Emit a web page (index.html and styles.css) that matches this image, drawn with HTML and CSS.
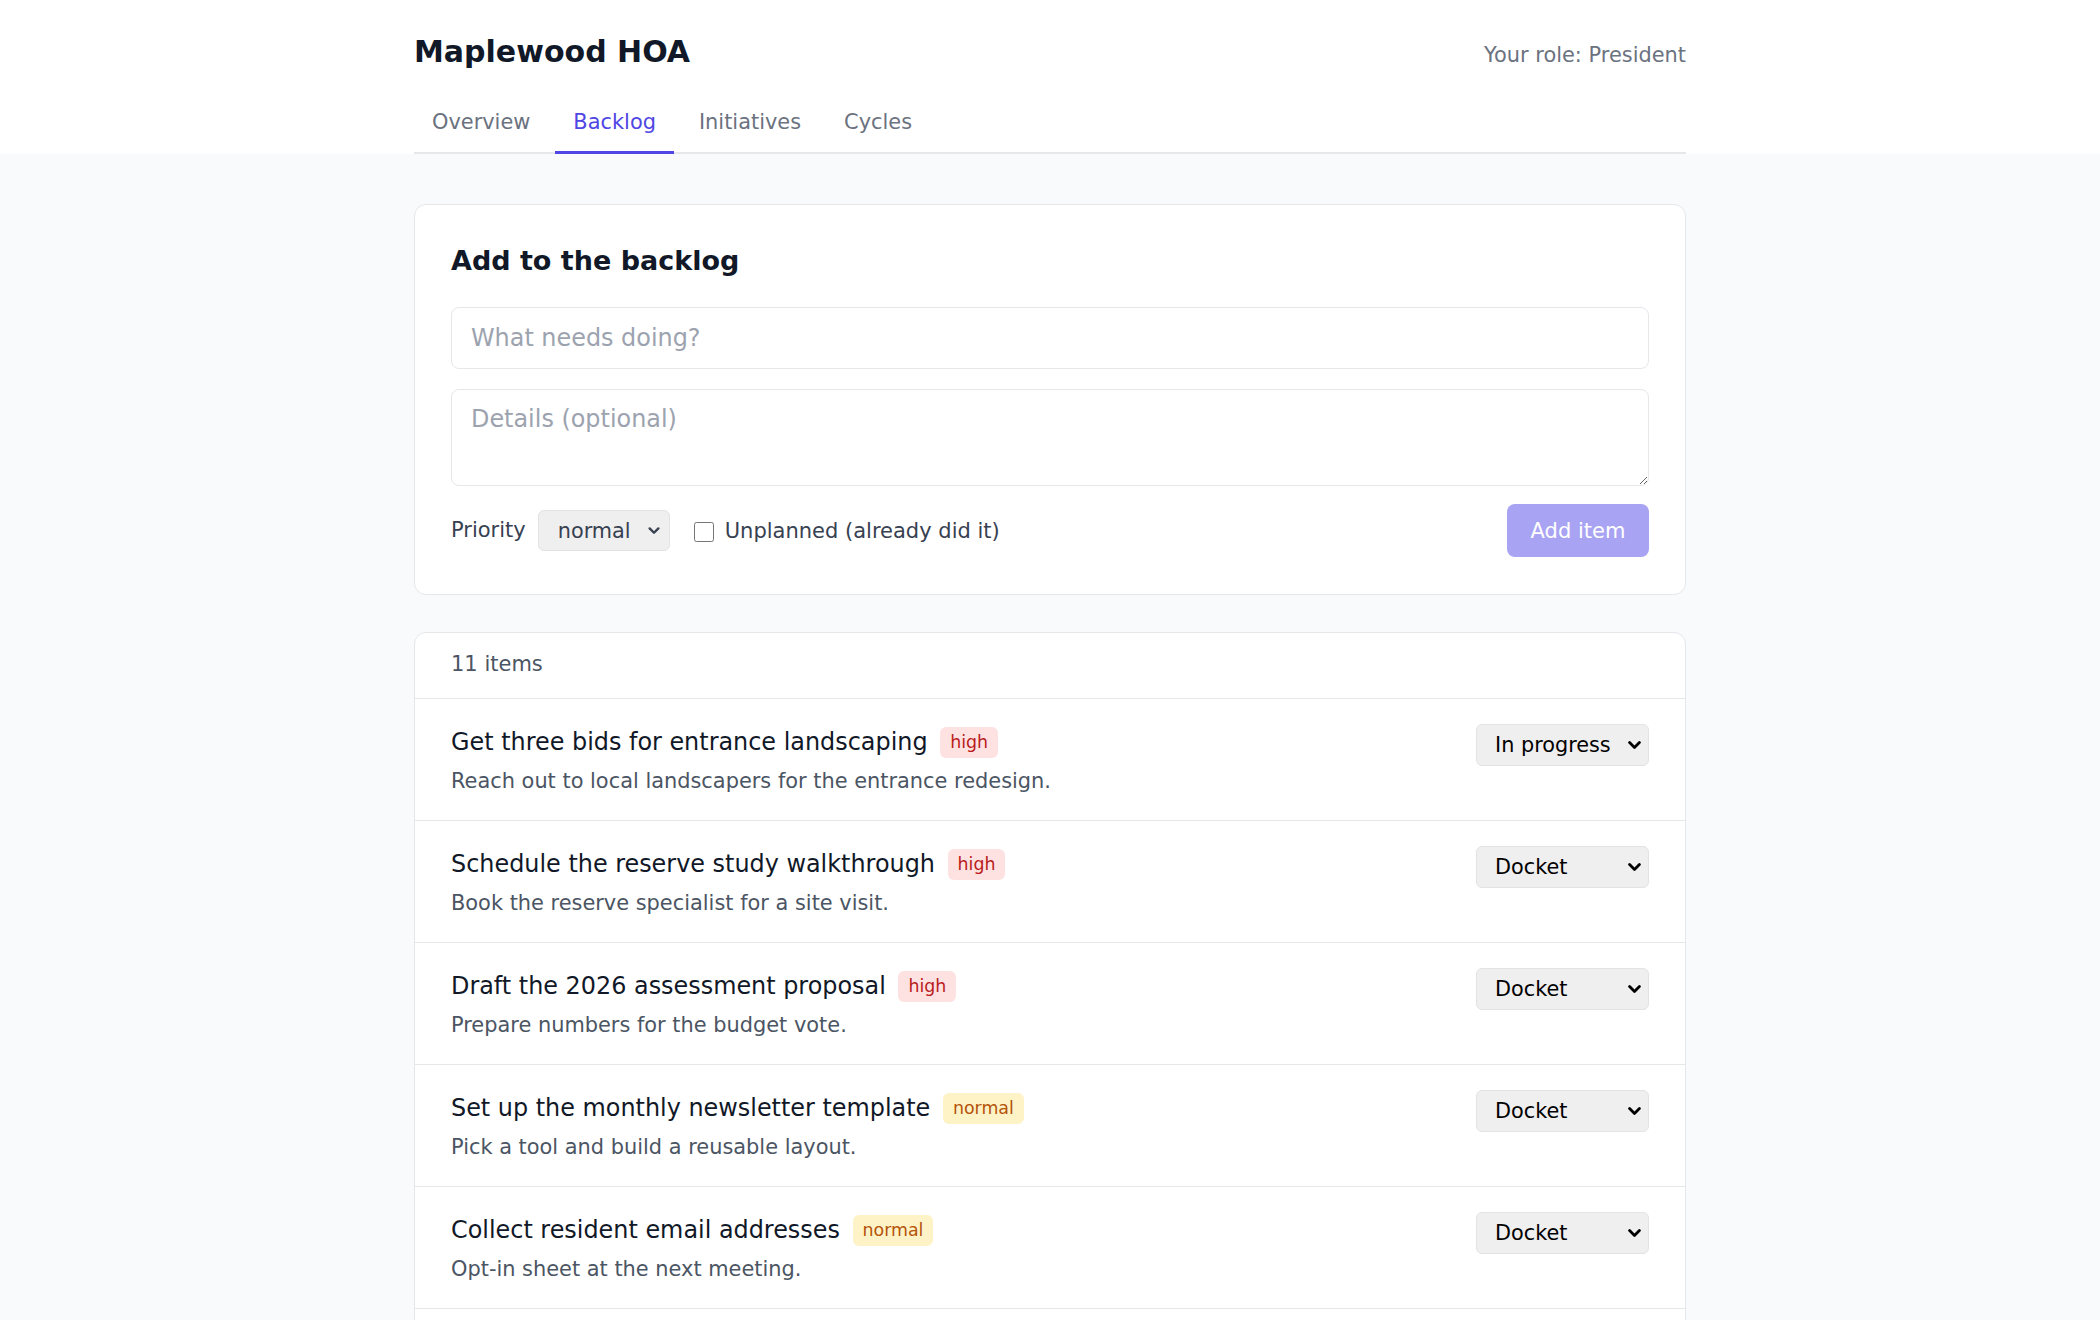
FILE: index.html
```html
<!DOCTYPE html>
<html lang="en">
<head>
<meta charset="utf-8">
<title>Maplewood HOA — Backlog</title>
<link rel="stylesheet" href="styles.css">
</head>
<body>
<header class="site-header">
  <div class="container">
    <div class="topbar">
      <h1 class="brand">Maplewood HOA</h1>
      <span class="role">Your role: President</span>
    </div>
    <nav class="tabs">
      <a class="tab" href="#">Overview</a>
      <a class="tab active" href="#">Backlog</a>
      <a class="tab" href="#">Initiatives</a>
      <a class="tab" href="#">Cycles</a>
    </nav>
  </div>
</header>

<main class="container main">
  <section class="card add-card">
    <h2 class="card-title">Add to the backlog</h2>
    <input class="field" type="text" placeholder="What needs doing?">
    <textarea class="field area" placeholder="Details (optional)"></textarea>
    <div class="form-row">
      <label class="prio-label">Priority</label>
      <select class="select prio-select">
        <option>low</option>
        <option selected>normal</option>
        <option>high</option>
      </select>
      <label class="check">
        <input type="checkbox" class="checkbox">
        <span>Unplanned (already did it)</span>
      </label>
      <button class="btn-primary" disabled>Add item</button>
    </div>
  </section>

  <section class="card list-card">
    <div class="list-head">11 items</div>
    <ul class="items">
      <li class="item">
        <div class="item-body">
          <div class="item-title">Get three bids for entrance landscaping <span class="badge high">high</span></div>
          <div class="item-desc">Reach out to local landscapers for the entrance redesign.</div>
        </div>
        <select class="select status"><option>Docket</option><option selected>In progress</option><option>Done</option></select>
      </li>
      <li class="item">
        <div class="item-body">
          <div class="item-title">Schedule the reserve study walkthrough <span class="badge high">high</span></div>
          <div class="item-desc">Book the reserve specialist for a site visit.</div>
        </div>
        <select class="select status"><option selected>Docket</option><option>In progress</option><option>Done</option></select>
      </li>
      <li class="item">
        <div class="item-body">
          <div class="item-title">Draft the 2026 assessment proposal <span class="badge high">high</span></div>
          <div class="item-desc">Prepare numbers for the budget vote.</div>
        </div>
        <select class="select status"><option selected>Docket</option><option>In progress</option><option>Done</option></select>
      </li>
      <li class="item">
        <div class="item-body">
          <div class="item-title">Set up the monthly newsletter template <span class="badge normal">normal</span></div>
          <div class="item-desc">Pick a tool and build a reusable layout.</div>
        </div>
        <select class="select status"><option selected>Docket</option><option>In progress</option><option>Done</option></select>
      </li>
      <li class="item">
        <div class="item-body">
          <div class="item-title">Collect resident email addresses <span class="badge normal">normal</span></div>
          <div class="item-desc">Opt-in sheet at the next meeting.</div>
        </div>
        <select class="select status"><option selected>Docket</option><option>In progress</option><option>Done</option></select>
      </li>
      <li class="item">
        <div class="item-body">
          <div class="item-title">Replace the pool gate latch <span class="badge normal">normal</span></div>
          <div class="item-desc">Current latch does not close on its own.</div>
        </div>
        <select class="select status"><option selected>Docket</option><option>In progress</option><option>Done</option></select>
      </li>
      <li class="item">
        <div class="item-body">
          <div class="item-title">Update the architectural review form <span class="badge normal">normal</span></div>
          <div class="item-desc">Add a section for solar panel requests.</div>
        </div>
        <select class="select status"><option selected>Docket</option><option>In progress</option><option>Done</option></select>
      </li>
      <li class="item">
        <div class="item-body">
          <div class="item-title">Post the meeting minutes online <span class="badge normal">normal</span></div>
          <div class="item-desc">Upload last month's approved minutes.</div>
        </div>
        <select class="select status"><option selected>Docket</option><option>In progress</option><option>Done</option></select>
      </li>
      <li class="item">
        <div class="item-body">
          <div class="item-title">Repaint the mailbox kiosk <span class="badge low">low</span></div>
          <div class="item-desc">Get a quote for paint and labor.</div>
        </div>
        <select class="select status"><option selected>Docket</option><option>In progress</option><option>Done</option></select>
      </li>
      <li class="item">
        <div class="item-body">
          <div class="item-title">Organize the spring cleanup day <span class="badge low">low</span></div>
          <div class="item-desc">Pick a date and order dumpsters.</div>
        </div>
        <select class="select status"><option selected>Docket</option><option>In progress</option><option>Done</option></select>
      </li>
      <li class="item">
        <div class="item-body">
          <div class="item-title">Review the parking rules <span class="badge low">low</span></div>
          <div class="item-desc">Collect feedback on guest parking.</div>
        </div>
        <select class="select status"><option selected>Docket</option><option>In progress</option><option>Done</option></select>
      </li>
    </ul>
  </section>
</main>
</body>
</html>
```

FILE: styles.css
```css
* { box-sizing: border-box; }

html, body {
  margin: 0;
  padding: 0;
}

body {
  background: #f9fafb;
  font-family: "DejaVu Sans", "Noto Sans", sans-serif;
  color: #111827;
  font-size: 21px;
}

.container {
  width: 1272px;
  margin: 0 auto;
}

.site-header {
  background: #ffffff;
}

.topbar {
  display: flex;
  justify-content: space-between;
  align-items: baseline;
  padding-top: 34px;
}

.brand {
  margin: 0;
  font-size: 30px;
  line-height: 36px;
  font-weight: 700;
  color: #111827;
}

.role {
  font-size: 20.9px;
  color: #6b7280;
}

.tabs {
  display: flex;
  gap: 7px;
  margin-top: 25px;
  border-bottom: 2px solid #e5e7eb;
}

.tab {
  display: block;
  padding: 12px 18px 13px;
  font-size: 20.9px;
  line-height: 31px;
  color: #6b7280;
  text-decoration: none;
  border-bottom: 3px solid transparent;
  margin-bottom: -2px;
}

.tab.active {
  color: #4f46e5;
  border-bottom-color: #4f46e5;
}

.main {
  padding-top: 50px;
  padding-bottom: 40px;
}

.card {
  background: #ffffff;
  border: 1px solid #e5e7eb;
  border-radius: 12px;
}

.add-card {
  padding: 36px 36px 37px;
}

.card-title {
  margin: 0 0 26px;
  font-size: 27px;
  line-height: 40px;
  font-weight: 700;
  color: #111827;
}

.field {
  display: block;
  width: 100%;
  font-family: "DejaVu Sans", sans-serif;
  font-size: 23.9px;
  line-height: 28px;
  color: #111827;
  background: #ffffff;
  border: 1px solid #e5e7eb;
  border-radius: 8px;
  padding: 16px 19px;
  height: 62px;
  outline: none;
}

.field::placeholder {
  color: #9ca3af;
}

.area {
  margin-top: 20px;
  height: 97px;
  padding-top: 15px;
  resize: vertical;
}

.form-row {
  display: flex;
  align-items: center;
  margin-top: 18px;
}

.prio-label {
  color: #374151;
  font-size: 21px;
  margin-top: -2px;
}

.select {
  -webkit-appearance: none;
  appearance: none;
  font-family: "DejaVu Sans", sans-serif;
  font-size: 20.8px;
  background-color: #efefef;
  background-image: url("data:image/svg+xml,%3Csvg xmlns='http://www.w3.org/2000/svg' width='13' height='9' viewBox='0 0 13 9'%3E%3Cpath d='M1.6 1.6 L6.5 6.5 L11.4 1.6' fill='none' stroke='%23000' stroke-width='2.8' stroke-linecap='round' stroke-linejoin='round'/%3E%3C/svg%3E");
  background-repeat: no-repeat;
  background-position: right 7px center;
  background-size: 13px 9px;
  border: 1px solid #e3e3e3;
  border-radius: 6px;
  color: #000000;
}

.prio-select {
  margin-left: 12px;
  width: 132px;
  height: 41px;
  padding: 0 24px 0 19px;
  color: #374151;
  background-image: url("data:image/svg+xml,%3Csvg xmlns='http://www.w3.org/2000/svg' width='13' height='9' viewBox='0 0 13 9'%3E%3Cpath d='M1.6 1.6 L6.5 6.5 L11.4 1.6' fill='none' stroke='%23374151' stroke-width='2.6' stroke-linecap='round' stroke-linejoin='round'/%3E%3C/svg%3E");
  background-position: right 9px center;
  background-size: 12px 8px;
}

.check {
  display: flex;
  align-items: center;
  margin-left: 24px;
  color: #374151;
  font-size: 21px;
}

.checkbox {
  width: 20px;
  height: 20px;
  margin: 2px 11px 0 0;
}

.btn-primary {
  margin-left: auto;
  width: 142px;
  height: 53px;
  font-family: "DejaVu Sans", sans-serif;
  font-size: 21px;
  color: #ffffff;
  background: #a8a3f2;
  border: none;
  border-radius: 8px;
}

.list-card {
  margin-top: 37px;
  overflow: hidden;
}

.list-head {
  padding: 16px 36px 18px;
  line-height: 31px;
  color: #4b5563;
  font-size: 21px;
  border-bottom: 1px solid #e5e7eb;
}

.items {
  list-style: none;
  margin: 0;
  padding: 0;
}

.item {
  display: flex;
  justify-content: space-between;
  align-items: flex-start;
  padding: 25px 36px 23px;
  border-bottom: 1px solid #e5e7eb;
}

.item:last-child {
  border-bottom: none;
}

.item-title {
  font-size: 23.9px;
  line-height: 36px;
  color: #111827;
}

.badge {
  display: inline-block;
  vertical-align: 2px;
  margin-left: 5px;
  padding: 5px 10px;
  font-size: 17.4px;
  line-height: 21px;
  border-radius: 6px;
}

.badge.high {
  background: #fee2e2;
  color: #b91c1c;
}

.badge.normal {
  background: #fef3c7;
  color: #b45309;
}

.badge.low {
  background: #e5e7eb;
  color: #374151;
}

.item-desc {
  margin-top: 6px;
  font-size: 20.9px;
  line-height: 31px;
  color: #4b5563;
}

.status {
  margin-top: 0;
  width: 173px;
  height: 42px;
  padding: 0 28px 0 18px;
}
```
